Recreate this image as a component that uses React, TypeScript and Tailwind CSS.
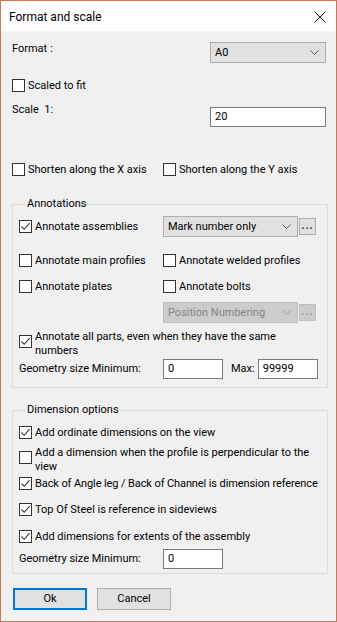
import React from 'react'

const font = { fontFamily: 'Roboto, "Noto Sans", sans-serif' }

const Box = ({ checked }: { checked?: boolean }) => (
  <span className="w-[13px] h-[13px] shrink-0 border border-[#333333] bg-white flex items-center justify-center">
    {checked && (
      <svg width="11" height="11" viewBox="0 0 11 11">
        <path d="M1.5 5.5 L4.2 8.3 L9.6 2.2" fill="none" stroke="#333333" strokeWidth="1.1" />
      </svg>
    )}
  </span>
)

const Check = ({ label, checked, className = '' }: { label: string; checked?: boolean; className?: string }) => (
  <label className={`flex items-center gap-[3px] h-[15px] whitespace-nowrap ${className}`}>
    <Box checked={checked} />
    <span>{label}</span>
  </label>
)

// two-line label, box sits a bit below the first line
const CheckWrap = ({ lines, checked, className = '' }: { lines: string[]; checked?: boolean; className?: string }) => (
  <label className={`flex items-start gap-[3px] ${className}`}>
    <span className="mt-[5px]">
      <Box checked={checked} />
    </span>
    <span className="leading-[14px] whitespace-nowrap">
      {lines.map((l, i) => (
        <React.Fragment key={i}>
          {l}
          {i < lines.length - 1 && <br />}
        </React.Fragment>
      ))}
    </span>
  </label>
)

const Chevron = ({ color = '#5a5a5a' }: { color?: string }) => (
  <svg width="9" height="5" viewBox="0 0 9 5">
    <path d="M0.5 0.5 L4.5 4.5 L8.5 0.5" fill="none" stroke={color} strokeWidth="1" />
  </svg>
)

const Select = ({ value, width, disabled }: { value: string; width: string; disabled?: boolean }) => (
  <div
    className={`${width} h-[21px] flex items-center justify-between pl-[4px] pr-[6px] border ${
      disabled ? 'bg-[#cccccc] border-[#bfbfbf] text-[#838383]' : 'bg-[#e1e1e1] border-[#adadad] text-black'
    }`}
  >
    <span>{value}</span>
    <Chevron color={disabled ? '#a0a0a0' : '#5a5a5a'} />
  </div>
)

const Dots = ({ disabled }: { disabled?: boolean }) => (
  <div
    className={`w-[17px] h-[17px] border flex items-end justify-center pb-[3px] text-[11px] leading-[10px] tracking-[1px] font-bold ${
      disabled ? 'bg-[#cccccc] border-[#bfbfbf] text-[#9a9a9a]' : 'bg-[#e1e1e1] border-[#adadad] text-[#3a2a5a]'
    }`}
  >
    ...
  </div>
)

const Input = ({ value, width }: { value: string; width: string }) => (
  <div className={`${width} h-[20px] bg-white border border-[#7a7a7a] flex items-center pl-[4px]`}>{value}</div>
)

export default function App() {
  return (
    <div
      style={font}
      className="w-[337px] h-[622px] border border-[#c27c5a] bg-[#f0f0f0] text-[11px] leading-[16px] text-black flex flex-col overflow-hidden"
    >
      {/* title bar */}
      <div className="h-[30px] bg-white flex items-center justify-between pl-[8px] pr-[10px] shrink-0">
        <span className="text-[12px] mt-[1px]">Format and scale</span>
        <svg width="12" height="12" viewBox="0 0 12 12" className="mt-[1px]">
          <path d="M0.5 0.5 L11.5 11.5 M11.5 0.5 L0.5 11.5" stroke="#111111" strokeWidth="1" />
        </svg>
      </div>

      <div className="flex flex-col pl-[11px] pr-[10px]">
        <div className="flex justify-between items-start mt-[11px]">
          <span className="-mt-[1px]">Format :</span>
          <Select value="A0" width="w-[116px]" />
        </div>

        <Check label="Scaled to fit" className="mt-[15px]" />

        <div className="flex justify-between items-start mt-[14px]">
          <span className="-mt-[5px]">Scale&nbsp;&nbsp;1:</span>
          <Input value="20" width="w-[116px]" />
        </div>

        <div className="grid grid-cols-[151px_1fr] mt-[35px]">
          <Check label="Shorten along the X axis" />
          <Check label="Shorten along the Y axis" />
        </div>

        <fieldset className="border border-[#dcdcdc] mt-[19px] pl-[6px] pr-[9px] pb-[8px]">
          <legend className="ml-[7px] px-[1px] leading-[16px]">Annotations</legend>
          <div className="grid grid-cols-[144px_1fr] items-center mt-[4px]">
            <Check label="Annotate assemblies" checked />
            <div className="flex items-center gap-[1px]">
              <Select value="Mark number only" width="w-[135px]" />
              <Dots />
            </div>
          </div>
          <div className="grid grid-cols-[144px_1fr] mt-[16px]">
            <Check label="Annotate main profiles" />
            <Check label="Annotate welded profiles" />
          </div>
          <div className="grid grid-cols-[144px_1fr] mt-[11px]">
            <Check label="Annotate plates" />
            <Check label="Annotate bolts" />
          </div>
          <div className="grid grid-cols-[144px_1fr] mt-[8px]">
            <div />
            <div className="flex items-center gap-[1px]">
              <Select value="Position Numbering" width="w-[135px]" disabled />
              <Dots disabled />
            </div>
          </div>
          <CheckWrap
            className="mt-[7px]"
            checked
            lines={['Annotate all parts, even when they have the same', 'numbers']}
          />
          <div className="grid grid-cols-[144px_1fr] items-center mt-[1px]">
            <span>Geometry size Minimum:</span>
            <div className="flex items-center">
              <Input value="0" width="w-[60px]" />
              <span className="ml-[8px] mr-[3px]">Max:</span>
              <Input value="99999" width="w-[60px]" />
            </div>
          </div>
        </fieldset>

        <fieldset className="border border-[#dcdcdc] mt-[14px] pl-[6px] pr-[9px] pb-[4px]">
          <legend className="ml-[7px] px-[1px] leading-[16px]">Dimension options</legend>
          <Check label="Add ordinate dimensions on the view" checked className="mt-[7px]" />
          <CheckWrap
            className="mt-[6px]"
            lines={['Add a dimension when the profile is perpendicular to the', 'view']}
          />
          <Check
            label="Back of Angle leg / Back of Channel is dimension reference"
            checked
            className="mt-[2px] tracking-[-0.1px]"
          />
          <Check label="Top Of Steel is reference in sideviews" checked className="mt-[11px]" />
          <Check label="Add dimensions for extents of the assembly" checked className="mt-[12px]" />
          <div className="grid grid-cols-[144px_1fr] items-center mt-[5px]">
            <span>Geometry size Minimum:</span>
            <Input value="0" width="w-[60px]" />
          </div>
        </fieldset>

        <div className="flex gap-[10px] mt-[14px] pl-[1px]">
          <button className="w-[74px] h-[22px] bg-[#e1e1e1] border-2 border-[#0078d7] flex items-center justify-center">
            Ok
          </button>
          <button className="w-[74px] h-[22px] bg-[#e1e1e1] border border-[#adadad] flex items-center justify-center">
            Cancel
          </button>
        </div>
      </div>
    </div>
  )
}
